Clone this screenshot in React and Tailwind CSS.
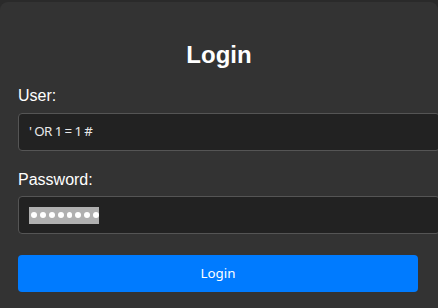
import React from 'react';

const dots = [0, 1, 2, 3, 4, 5, 6, 7];

export default function App() {
  return (
    <div className="w-[438px] h-[308px] overflow-hidden bg-[#2a2a2a] pt-[2px]">
      <div className="h-[320px] bg-[#333333] rounded-t-lg px-[18px] pt-[39px] text-white font-['Liberation_Sans',Arial,sans-serif]">
        {/* Title */}
        <h2 className="text-[24px] leading-[28px] font-bold text-center">Login</h2>

        {/* User */}
        <div className="mt-[18px] text-[16px] leading-[18px]">User:</div>
        <div className="mt-[8px] w-[422px] h-[38px] flex items-center pl-[10px] bg-[#222222] border border-[#555555] rounded-[4px] text-[13.33px] tracking-[-0.6px] text-[#e8e8e8] font-['Noto_Sans',sans-serif]">
          ' OR 1 = 1 #
        </div>

        {/* Password */}
        <div className="mt-[20px] text-[16px] leading-[18px]">Password:</div>
        <div className="mt-[7px] w-[422px] h-[38px] flex items-center pl-[10px] bg-[#222222] border border-[#555555] rounded-[4px]">
          <div className="flex items-center h-[17px] w-[70px] bg-[#b0b0b0] pl-[2px] gap-[3px]">
            {dots.map((d) => (
              <span key={d} className="block w-[6px] h-[6px] rounded-full bg-white" />
            ))}
          </div>
        </div>

        {/* Submit */}
        <button className="mt-[21px] w-[400px] h-[37px] bg-[#007bff] rounded-[4px] text-[13.33px] text-white font-['Noto_Sans',sans-serif] flex items-center justify-center">
          Login
        </button>
      </div>
    </div>
  );
}
